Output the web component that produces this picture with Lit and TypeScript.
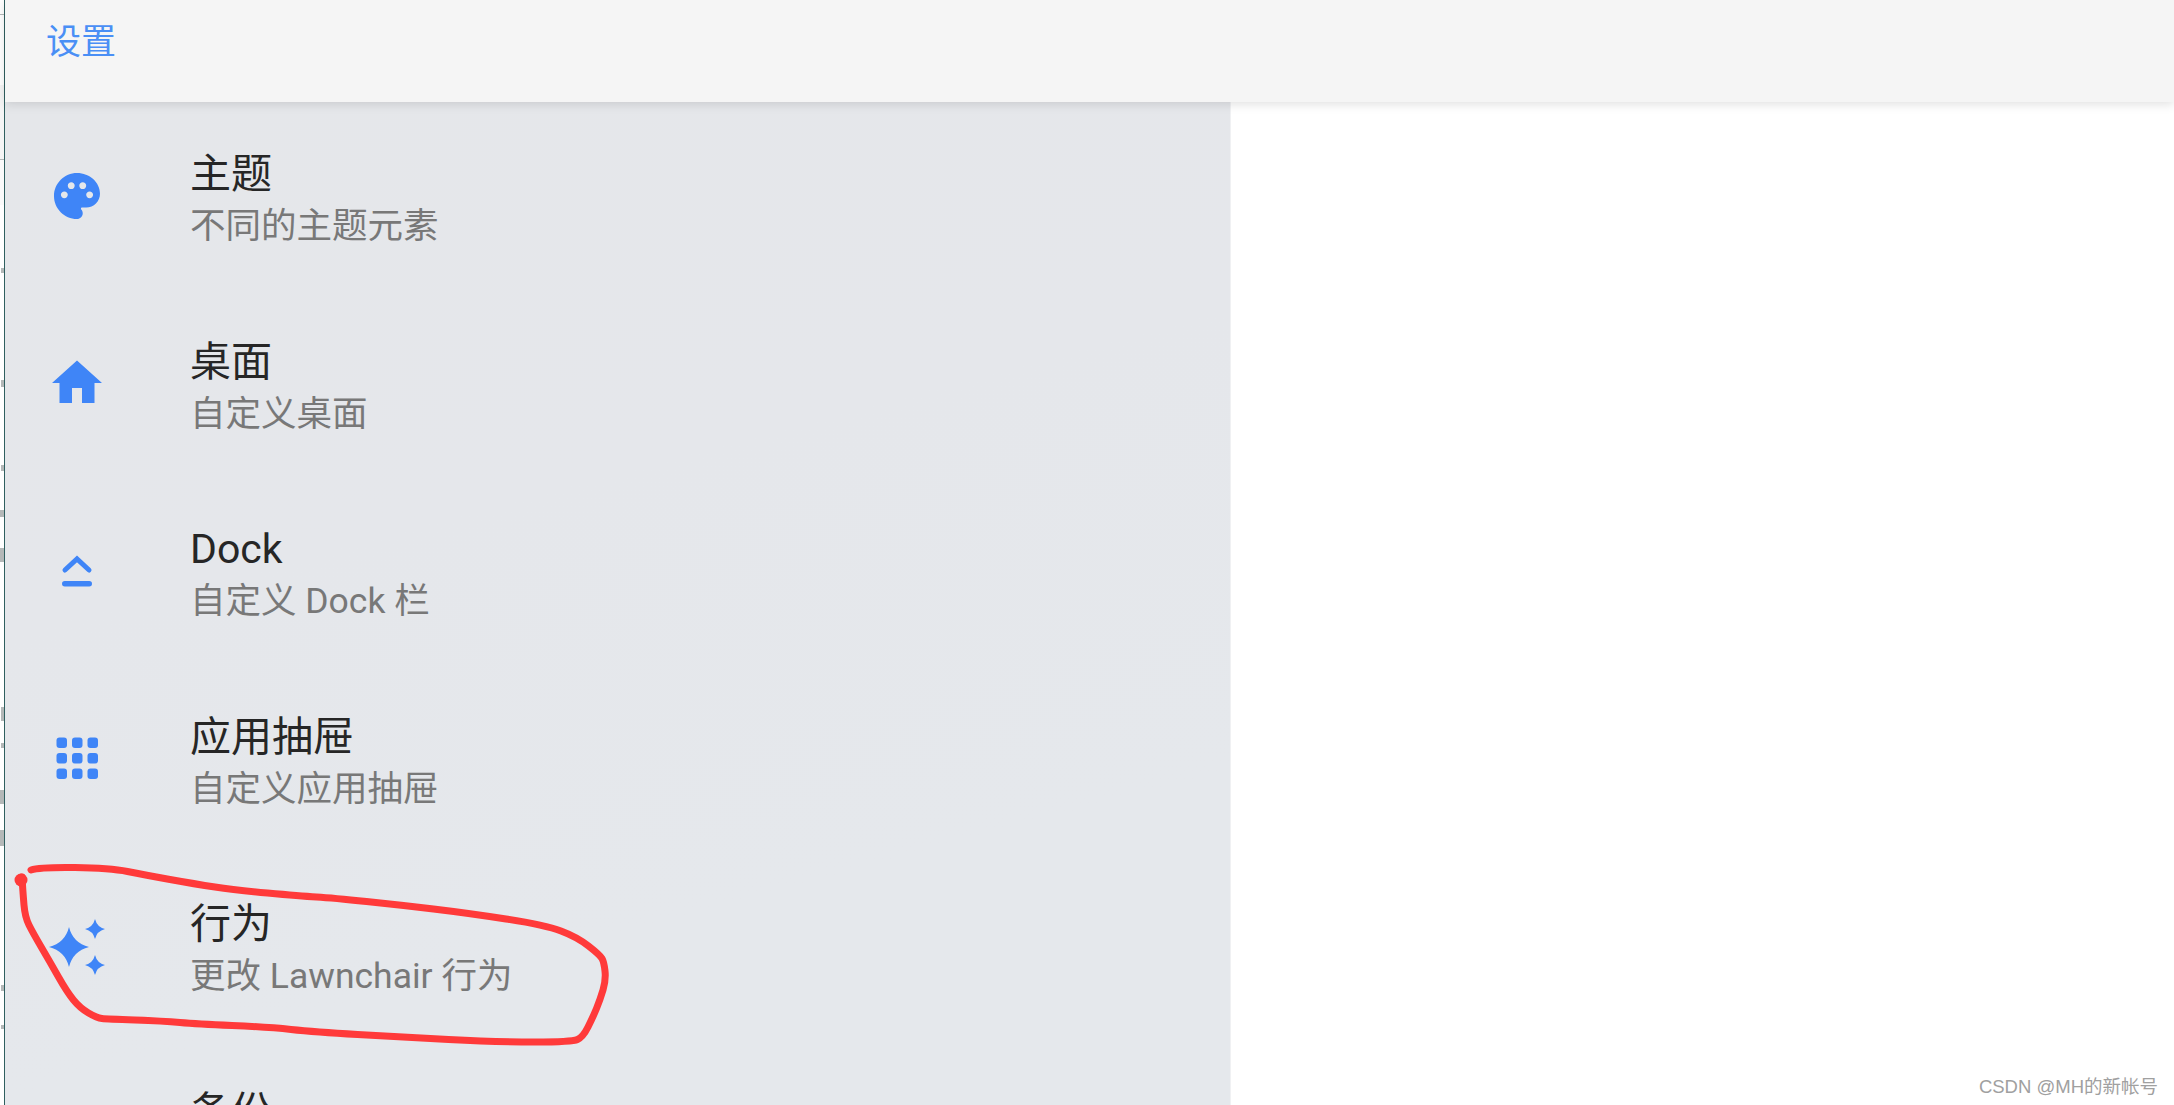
import { LitElement, html, css, svg } from "lit";
import { customElement } from "lit/decorators.js";

const star = (cx: number, cy: number, r: number) => {
  const k = r * 0.2;
  return svg`<path d="M${cx} ${cy - r}Q${cx + k} ${cy - k} ${cx + r} ${cy}Q${cx + k} ${cy + k} ${cx} ${cy + r}Q${cx - k} ${cy + k} ${cx - r} ${cy}Q${cx - k} ${cy - k} ${cx} ${cy - r}Z"/>`;
};

const ICONS = {
  palette: svg`<svg class="icon" viewBox="-1.04 -1.04 26.09 26.09"><path d="M12 2C6.49 2 2 6.49 2 12s4.49 10 10 10c1.38 0 2.5-1.12 2.5-2.5 0-.61-.23-1.2-.64-1.67-.08-.1-.13-.21-.13-.33 0-.28.22-.5.5-.5H16c3.31 0 6-2.69 6-6 0-4.96-4.49-9-10-9zm5.5 11c-.83 0-1.5-.67-1.5-1.5s.67-1.5 1.5-1.5 1.5.67 1.5 1.5-.67 1.5-1.5 1.5zm-3-4c-.83 0-1.5-.67-1.5-1.5S13.67 6 14.5 6s1.5.67 1.5 1.5S15.33 9 14.5 9zM5 11.5c0-.83.67-1.5 1.5-1.5s1.5.67 1.5 1.5S7.33 13 6.5 13 5 12.33 5 11.5zm6-4c0 .83-.67 1.5-1.5 1.5S8 8.33 8 7.5 8.67 6 9.5 6s1.5.67 1.5 1.5z"/></svg>`,
  home: svg`<svg class="icon" viewBox="0 0 24 24"><path d="M10 20v-6h4v6h5v-8h3L12 3 2 12h3v8z"/></svg>`,
  dock: svg`<svg class="icon" viewBox="0 0 60 60"><path d="M18 29 30 18 42 29" fill="none" stroke="currentColor" stroke-width="5" stroke-linecap="round" stroke-linejoin="miter"/><rect x="15" y="40" width="30" height="5.5" rx="2.75"/></svg>`,
  apps: svg`<svg class="icon" viewBox="0 0 60 60">${[9.5, 25, 40.5].flatMap((y) =>
    [9.5, 25, 40.5].map((x) => svg`<rect x=${x} y=${y} width="10.5" height="10.5" rx="3"/>`)
  )}</svg>`,
  sparkle: svg`<svg class="icon" viewBox="0 0 60 60">${star(22, 31, 20)}${star(48, 13, 10)}${star(48, 49, 10)}</svg>`,
};

const ROWS = [
  { icon: ICONS.palette, title: "主题", sub: "不同的主题元素" },
  { icon: ICONS.home, title: "桌面", sub: "自定义桌面" },
  { icon: ICONS.dock, title: "Dock", sub: "自定义 Dock 栏" },
  { icon: ICONS.apps, title: "应用抽屉", sub: "自定义应用抽屉" },
  { icon: ICONS.sparkle, title: "行为", sub: "更改 Lawnchair 行为" },
  { icon: null, title: "备份", sub: "" },
];

/* The hand-drawn red circle, smoothed through the midpoints of its samples. */
const POINTS: [number, number][] = [
  [22, 877], [23, 893], [25, 917], [33, 933], [50, 962], [67, 992], [80, 1008], [97, 1018], [107, 1019],
  [163, 1021], [197, 1024], [267, 1027], [315, 1032], [400, 1037], [497, 1042], [572, 1042], [583, 1037],
  [593, 1017], [600, 1000], [606, 980], [604, 962], [600, 955], [577, 937], [545, 925], [467, 913], [400, 905], [333, 898],
  [300, 896], [235, 890], [195, 884], [145, 875], [110, 868], [40, 867], [22, 873],
];
const INK = POINTS.reduce((d, [x, y], i) => {
  if (i === 0) return `M${x} ${y}`;
  const [px, py] = POINTS[i - 1];
  return `${d}Q${px} ${py} ${(px + x) / 2} ${(py + y) / 2}`;
}, "");

/* Slivers of a window that sits behind the screenshot, cut by its left edge. */
const SLIVERS: [number, number, number][] = [
  [14, 4, 1], [159, 4, 1], [268, 3, 5], [380, 3, 7], [465, 3, 6], [510, 4, 7], [548, 4, 14],
  [707, 3, 14], [743, 3, 5], [790, 4, 14], [830, 4, 16], [985, 3, 6], [1025, 3, 4],
];

@customElement("app-root")
export class AppRoot extends LitElement {
  static styles = css`
    :host {
      display: block;
      position: relative;
      width: 2174px;
      height: 1105px;
      overflow: hidden;
      background: #fff;
      font-family: Roboto, "Noto Sans CJK SC", sans-serif;
    }
    .page {
      display: grid;
      grid-template-columns: 5px 1fr;
      height: 100%;
    }
    .strip {
      border-right: 1px solid #2f5f5f;
      box-sizing: border-box;
      background: linear-gradient(#fff 0 85px, #f5f5f5 85px 159px, #fafafa 159px 205px, #fff 205px);
    }
    .strip svg {
      display: block;
      width: 4px;
      height: 1105px;
      fill: #b4b8b8;
    }
    .main {
      display: grid;
      grid-template-rows: 102px 1fr;
      min-width: 0;
      min-height: 0;
    }
    .header {
      position: relative;
      z-index: 1;
      display: flex;
      align-items: center;
      padding-left: 41px;
      background: #f5f5f5;
      box-shadow: 0 2px 10px rgba(0, 0, 0, 0.13);
    }
    .header-title {
      color: #4a8ff5;
      font-size: 35px;
      line-height: 40px;
      margin-top: -16px;
    }
    .body {
      display: grid;
      grid-template-columns: 1226px 1fr;
      min-height: 0;
      overflow: hidden;
    }
    .side {
      background: linear-gradient(165deg, #e5e7ea 0%, #e5e7eb 40%, #e5e8ec 75%);
      border-right: 1px solid #f0f1f3;
      overflow: hidden;
    }
    .row {
      display: grid;
      grid-template-columns: 60px 1fr;
      column-gap: 83px;
      align-items: center;
      height: 187.5px;
      padding-left: 42px;
    }
    .icon {
      display: block;
      width: 60px;
      height: 60px;
      fill: #3f85f7;
      color: #3f85f7;
    }
    .text {
      height: 108px;
      padding-top: 13px;
    }
    .title {
      color: #262626;
      font-size: 41px;
      line-height: 52px;
    }
    .sub {
      color: #787878;
      font-size: 35.5px;
      line-height: 52px;
    }
    .ink {
      position: absolute;
      inset: 0;
      width: 2174px;
      height: 1105px;
      z-index: 2;
      pointer-events: none;
    }
    .mark {
      position: absolute;
      right: 16px;
      bottom: 5px;
      z-index: 2;
      color: #a0a0a0;
      font-family: "Liberation Sans", "Noto Sans CJK SC", sans-serif;
      font-size: 18.5px;
      line-height: 26px;
    }
  `;

  render() {
    return html`
      <div class="page">
        <div class="strip">
          <svg viewBox="0 0 4 1105">
            ${SLIVERS.map(([y, w, h]) => svg`<rect x=${4 - w} y=${y} width=${w} height=${h} />`)}
          </svg>
        </div>
        <div class="main">
          <header class="header"><span class="header-title">设置</span></header>
          <div class="body">
            <nav class="side">
              ${ROWS.map(
                (r) => html`
                  <div class="row">
                    <div>${r.icon}</div>
                    <div class="text">
                      <div class="title">${r.title}</div>
                      <div class="sub">${r.sub}</div>
                    </div>
                  </div>
                `
              )}
            </nav>
            <div></div>
          </div>
        </div>
      </div>
      <svg class="ink" viewBox="0 0 2174 1105">
        <path d=${INK} fill="none" stroke="#ff3a3a" stroke-width="7" stroke-linejoin="round" stroke-linecap="round" />
        <circle cx="21" cy="880" r="6.5" fill="#ff3a3a" />
      </svg>
      <div class="mark">CSDN @MH的新帐号</div>
    `;
  }
}
